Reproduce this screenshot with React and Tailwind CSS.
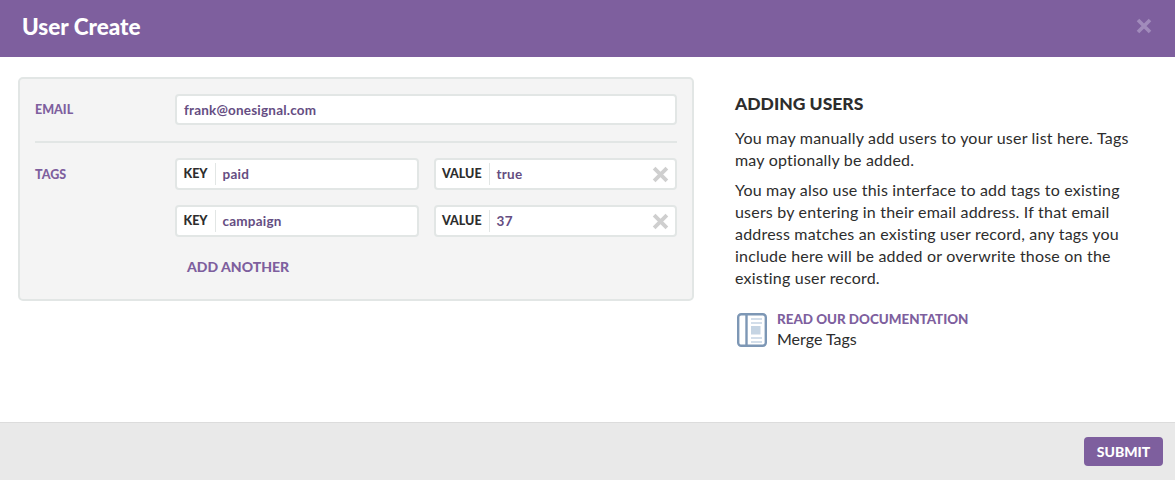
import React from 'react';

const font = "font-['Lato','Noto_Sans',sans-serif]";

function CloseIcon({ className }) {
    return (
        <svg viewBox="0 0 16 16" className={className} fill="none" stroke="currentColor" strokeWidth="3.6">
            <path d="M2 2 L14 14 M14 2 L2 14" />
        </svg>
    );
}

function BookIcon() {
    return (
        <svg width="30" height="34" viewBox="0 0 30 34" fill="none" className="shrink-0">
            <rect x="1.2" y="1.2" width="27.6" height="31.6" rx="3" fill="#fff" stroke="#7d97b5" strokeWidth="2.4" />
            <path d="M9.5 2 V32" stroke="#7d97b5" strokeWidth="2.4" />
            <path d="M14 6 H25 M14 10 H25 M14 25 H25 M14 29 H25" stroke="#c5d4e3" strokeWidth="1.6" />
            <rect x="14" y="13" width="9.5" height="8.5" fill="#c5d4e3" />
        </svg>
    );
}

function TagField({ label, value, removable }) {
    return (
        <div className="flex-1 h-8 flex items-center bg-white border-2 border-[#e2e6e5] rounded-[4px]">
            <span className="pl-[6.5px] pr-[7px] pt-[1.5px] h-[22px] flex items-center border-r border-[#e2e6e5] text-[12.5px] font-black text-[#2d2d2d]">{label}</span>
            <span className="flex-1 pl-[7px] pt-[1px] text-[13.5px] tracking-[0.2px] font-bold text-[#654d82]">{value}</span>
            {removable && <CloseIcon className="w-[17px] h-[17px] mr-[6px] text-[#cfcfcf]" />}
        </div>
    );
}

export default function App() {
    return (
        <div className={`${font} w-[1175px] h-[480px] flex flex-col bg-white overflow-hidden`}>
            {/* Header */}
            <div className="h-[57px] shrink-0 flex items-center justify-between pl-[22px] pr-[23px] pb-[3px] bg-[#7e5f9e]">
                <h1 className="text-[22.5px] font-black text-white">User Create</h1>
                <CloseIcon className="w-[16px] h-[16px] -mt-[2px] text-[#a18bbb]" />
            </div>

            {/* Body */}
            <div className="flex-1 flex">
                <div className="w-[735px] shrink-0 pl-[18px] pr-[41px] pt-5">
                    <div className="bg-[#f4f4f4] border-2 border-[#e2e6e5] rounded-[5px] pl-[15px] pr-[15px] pt-[15px] h-[224px]">
                        <div className="flex items-start pb-4 border-b-2 border-[#e2e6e5]">
                            <label className="w-[140px] pt-[7px] text-[12.5px] font-black text-[#7e5f9e]">EMAIL</label>
                            <div className="flex-1 h-[31px] flex items-center pl-[7px] pt-[1px] bg-white border-2 border-[#e2e6e5] rounded-[4px] text-[13.5px] tracking-[0.2px] font-bold text-[#654d82]">
                                frank@onesignal.com
                            </div>
                        </div>
                        <div className="flex items-start pt-[15px]">
                            <label className="w-[140px] pt-[8px] text-[12.5px] font-black text-[#7e5f9e]">TAGS</label>
                            <div className="flex-1 flex flex-col gap-[15px]">
                                <div className="flex gap-[15px]">
                                    <TagField label="KEY" value="paid" />
                                    <TagField label="VALUE" value="true" removable />
                                </div>
                                <div className="flex gap-[15px]">
                                    <TagField label="KEY" value="campaign" />
                                    <TagField label="VALUE" value="37" removable />
                                </div>
                                <button className="self-start ml-3 mt-1 text-[14px] font-black text-[#7e5f9e]">ADD ANOTHER</button>
                            </div>
                        </div>
                    </div>
                </div>

                <div className="flex-1 pr-[36px] pt-[37px] text-[#2d2d2d]">
                    <h2 className="text-[17.5px] leading-5 font-black">ADDING USERS</h2>
                    <p className="mt-[13px] text-[16px] tracking-[0.2px] leading-[22px]">
                        You may manually add users to your user list here. Tags may optionally be added.
                    </p>
                    <p className="mt-2 text-[16px] tracking-[0.2px] leading-[22px]">
                        You may also use this interface to add tags to existing users by entering in their email address. If that email address matches an existing user record, any tags you include here will be added or overwrite those on the existing user record.
                    </p>
                    <div className="mt-[21px] ml-[2px] flex items-center gap-[10px]">
                        <BookIcon />
                        <div>
                            <div className="text-[13.4px] leading-[18px] font-black text-[#7e5f9e]">READ OUR DOCUMENTATION</div>
                            <div className="text-[16px] leading-[22px]">Merge Tags</div>
                        </div>
                    </div>
                </div>
            </div>

            {/* Footer */}
            <div className="h-[58px] shrink-0 flex items-center justify-end pr-3 bg-[#e9e9e9] border-t border-[#dcdcdc]">
                <button className="w-[79px] h-[29px] rounded-[4px] bg-[#7e5f9e] text-[14px] font-black text-white">SUBMIT</button>
            </div>
        </div>
    );
}
